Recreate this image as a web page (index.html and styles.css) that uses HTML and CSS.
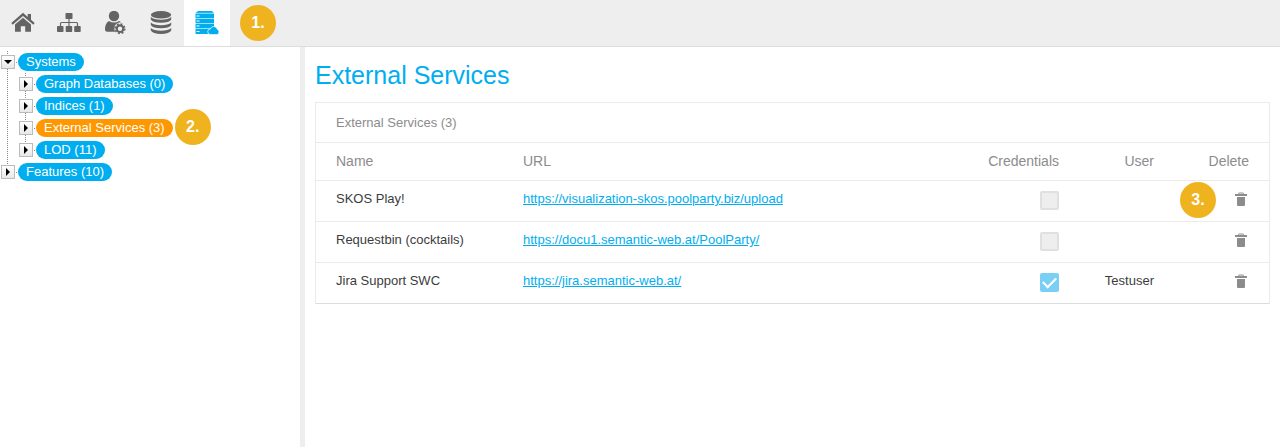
FILE: index.html
```html
<!DOCTYPE html>
<html lang="en">
<head>
    <meta charset="UTF-8">
    <meta name="viewport" content="width=device-width, initial-scale=1.0">
    <title>External Services</title>
    <link rel="stylesheet" href="styles.css">
</head>
<body>
    <svg class="sprite" aria-hidden="true">
        <symbol id="trash" viewBox="0 0 12 15">
            <path d="M3.500 2.500V1.500q0-.5.5-.5h4q.5 0 .5.5v1" fill="none" stroke="currentColor"/>
            <path d="M0 2h12v2H0zM2 5h8v8q0 1-1 1H3q-1 0-1-1z" fill="currentColor"/>
        </symbol>
    </svg>

    <nav class="toolbar">
        <button class="tool" type="button" aria-label="Home">
            <svg width="24" height="24" viewBox="0 0 24 24" fill="currentColor">
                <path d="M12 1.800.3 12l1.400 1.700L12 4.900l10.300 8.800 1.400-1.700L20 8.800V3h-3.300v2.900z"/>
                <path d="M12 6.800 4 13.600V20.700H9.800v-5.500h4.400v5.500H20v-7.100z"/>
            </svg>
        </button>
        <button class="tool" type="button" aria-label="Hierarchy">
            <svg width="24" height="24" viewBox="0 0 24 24" fill="currentColor">
                <rect x="8.500" y="2" width="7" height="6" rx=".8"/>
                <rect x="0" y="15" width="6.500" height="6" rx=".8"/>
                <rect x="8.700" y="15" width="6.500" height="6" rx=".8"/>
                <rect x="17.200" y="15" width="6.500" height="6" rx=".8"/>
                <path d="M12 8v7M3.500 15v-2.500q0-1 1-1h15q1 0 1 1V15" fill="none" stroke="currentColor" stroke-width="1.200"/>
            </svg>
        </button>
        <button class="tool" type="button" aria-label="User settings">
            <svg width="24" height="24" viewBox="0 0 24 24" fill="currentColor">
                <circle cx="11" cy="5" r="5.200"/>
                <path d="M6 10q5 3 10 0 1.300.5 2 1.300-6.300.2-6.700 6.200 0 2 1 3.300H4.300Q2 20.800 2 18.500 2 12 6 10z"/>
                <circle cx="17" cy="17.700" r="3.300" fill="none" stroke="currentColor" stroke-width="2.200"/>
                <circle cx="17" cy="17.700" r="4.800" fill="none" stroke="currentColor" stroke-width="1.600" stroke-dasharray="1.900 1.870"/>
            </svg>
        </button>
        <button class="tool" type="button" aria-label="Database">
            <svg width="24" height="24" viewBox="0 0 24 24" fill="currentColor">
                <ellipse cx="12" cy="3.800" rx="10.200" ry="3.700"/>
                <path d="M1.800 6q3 2.800 10.200 2.800T22.200 6v2.500q-2 3.200-10.200 3.200T1.800 8.500z"/>
                <path d="M1.800 11.500q3 2.800 10.200 2.800t10.200-2.800V14q-2 3.200-10.200 3.200T1.800 14z"/>
                <path d="M1.800 17q3 2.800 10.200 2.800T22.200 17v2.500q-2 3.400-10.200 3.400T1.800 19.500z"/>
            </svg>
        </button>
        <button class="tool active" type="button" aria-label="Systems">
            <svg width="24" height="24" viewBox="0 0 24 24">
                <path d="M3 0h14l2 2.500V23H0V2.500z" fill="#00aeef"/>
                <path d="M0 2.300h19M0 7.500h19M0 12.500h19M0 17.500h19" stroke="#9fe0f9" stroke-width="1"/>
                <path d="M1.500 5h3M1.500 10h3M1.500 15h3M1.500 20.500h3" stroke="#fff" stroke-width="1"/>
                <path d="M0 0v23M19.500 0v23" stroke="#fff" stroke-width="1"/>
                <path d="M16 23.600q-3.300 0-3.300-2.900 0-2.200 2.500-2.600.8-2.600 3.500-2.600 3 0 3.600 2.900 1.700.4 1.700 2.500 0 2.700-2.500 2.700z" fill="#00aeef" stroke="#fff" stroke-width=".7"/>
            </svg>
        </button>
        <span class="step">1.</span>
    </nav>

    <div class="layout">
        <aside class="sidebar">
            <ul class="tree">
                <li>
                    <div class="node">
                        <button class="toggle open" type="button" aria-label="Collapse Systems"></button>
                        <a class="label" href="#systems">Systems</a>
                    </div>
                    <ul>
                        <li>
                            <div class="node">
                                <button class="toggle" type="button" aria-label="Expand Graph Databases"></button>
                                <a class="label" href="#graph">Graph Databases (0)</a>
                            </div>
                        </li>
                        <li>
                            <div class="node">
                                <button class="toggle" type="button" aria-label="Expand Indices"></button>
                                <a class="label" href="#indices">Indices (1)</a>
                            </div>
                        </li>
                        <li>
                            <div class="node">
                                <button class="toggle" type="button" aria-label="Expand External Services"></button>
                                <a class="label selected" href="#external">External Services (3)</a>
                                <span class="anchor"><span class="step step-tree">2.</span></span>
                            </div>
                        </li>
                        <li>
                            <div class="node">
                                <button class="toggle" type="button" aria-label="Expand LOD"></button>
                                <a class="label" href="#lod">LOD (11)</a>
                            </div>
                        </li>
                    </ul>
                </li>
                <li>
                    <div class="node">
                        <button class="toggle" type="button" aria-label="Expand Features"></button>
                        <a class="label" href="#features">Features (10)</a>
                    </div>
                </li>
            </ul>
        </aside>

        <main class="content">
            <h1>External Services</h1>
            <table class="services">
                <caption>External Services (3)</caption>
                <thead>
                    <tr>
                        <th class="col-name">Name</th>
                        <th>URL</th>
                        <th class="col-cred">Credentials</th>
                        <th class="col-end">User</th>
                        <th class="col-end">Delete</th>
                    </tr>
                </thead>
                <tbody>
                    <tr>
                        <td>SKOS Play!</td>
                        <td><a href="https://visualization-skos.poolparty.biz/upload">https://visualization-skos.poolparty.biz/upload</a></td>
                        <td><input type="checkbox" aria-label="SKOS Play! credentials" disabled></td>
                        <td class="user"></td>
                        <td class="delete">
                            <span class="step step-delete">3.</span>
                            <button type="button" aria-label="Delete SKOS Play!"><svg width="12" height="15"><use href="#trash"/></svg></button>
                        </td>
                    </tr>
                    <tr>
                        <td>Requestbin (cocktails)</td>
                        <td><a href="https://docu1.semantic-web.at/PoolParty/">https://docu1.semantic-web.at/PoolParty/</a></td>
                        <td><input type="checkbox" aria-label="Requestbin credentials" disabled></td>
                        <td class="user"></td>
                        <td class="delete">
                            <button type="button" aria-label="Delete Requestbin"><svg width="12" height="15"><use href="#trash"/></svg></button>
                        </td>
                    </tr>
                    <tr>
                        <td>Jira Support SWC</td>
                        <td><a href="https://jira.semantic-web.at/">https://jira.semantic-web.at/</a></td>
                        <td><input type="checkbox" aria-label="Jira credentials" checked disabled></td>
                        <td class="user">Testuser</td>
                        <td class="delete">
                            <button type="button" aria-label="Delete Jira Support SWC"><svg width="12" height="15"><use href="#trash"/></svg></button>
                        </td>
                    </tr>
                </tbody>
            </table>
        </main>
    </div>
</body>
</html>
```
FILE: styles.css
```css
* {
    box-sizing: border-box;
}
body {
    margin: 0;
    min-height: 100vh;
    display: flex;
    flex-direction: column;
    font-family: "Liberation Sans", Arial, sans-serif;
    font-size: 13px;
    line-height: 16px;
    color: #3c3c3c;
    background: #fff;
}
button {
    padding: 0;
    border: none;
    background: none;
    cursor: pointer;
}
.sprite {
    display: none;
}

/* toolbar */
.toolbar {
    display: flex;
    align-items: center;
    background: #eee;
    border-bottom: 1px solid #ddd;
}
.tool {
    display: flex;
    align-items: center;
    justify-content: center;
    width: 46px;
    height: 46px;
    color: #646464;
}
.tool.active {
    background: #fff;
}
.step {
    display: flex;
    align-items: center;
    justify-content: center;
    width: 36px;
    height: 36px;
    border-radius: 50%;
    background: #efb320;
    color: #fff;
    font-size: 16px;
    font-weight: bold;
}
.toolbar .step {
    margin-left: 10px;
}

.layout {
    display: flex;
    flex: 1;
}

/* tree */
.sidebar {
    flex: none;
    width: 305px;
    padding: 4px 0 0 1px;
    border-right: 5px solid #eee;
}
.tree, .tree ul {
    list-style: none;
    margin: 0;
    padding: 0;
}
.tree ul {
    padding-left: 18px;
}
.tree li {
    background: repeating-linear-gradient(#888 0 1px, transparent 1px 2px) 6px 0 / 1px 100% no-repeat;
}
.tree li:last-child {
    background-size: 1px 11px;
}
.node {
    display: flex;
    align-items: center;
    height: 22px;
    background: linear-gradient(#888, #888) 15px 11px / 1px 1px no-repeat;
}
.toggle {
    display: flex;
    align-items: center;
    justify-content: center;
    width: 14px;
    height: 14px;
    border: 1px solid #bbb;
    background: linear-gradient(#fff, #e8e8e8);
}
.toggle::before {
    content: "";
    border: 4px solid transparent;
    border-left-color: #000;
    border-right-width: 0;
}
.toggle.open::before {
    border: 4px solid transparent;
    border-top-color: #000;
    border-bottom-width: 0;
}
.label {
    margin-left: 3px;
    padding: 1px 8px;
    border-radius: 9px;
    background: #00aeef;
    color: #fff;
    text-decoration: none;
}
.label.selected {
    background: #ff9800;
}
.anchor {
    position: relative;
}
.step-tree {
    position: absolute;
    top: -19px;
    left: 2px;
}

/* services table */
.content {
    flex: 1;
    padding: 13px 10px;
}
h1 {
    margin: 0 0 12px;
    font-size: 25px;
    line-height: 30px;
    font-weight: normal;
    color: #00aeef;
}
.services {
    width: 100%;
    border: 1px solid #ebebeb;
    border-bottom-color: #ddd;
    border-spacing: 0;
}
.services caption {
    padding: 12px 20px 11px;
    border: 1px solid #ebebeb;
    border-bottom: none;
    text-align: left;
    color: #8c8c8c;
}
.services th {
    padding: 10px 20px 11px;
    font-size: 14px;
    font-weight: normal;
    text-align: left;
    color: #8c8c8c;
}
.services .col-name {
    width: 187px;
}
.services .col-cred {
    width: 111px;
}
.services .col-end {
    width: 95px;
}
.services .col-cred, .services .col-end, .services .user {
    text-align: right;
}
.services td {
    padding: 10px 20px 11px;
    border-top: 1px solid #ebebeb;
    vertical-align: top;
}
.services a {
    color: #00aeef;
}
.services input {
    appearance: none;
    display: grid;
    place-items: center;
    width: 19px;
    height: 19px;
    margin: 0 0 0 auto;
    border: 2px solid #e0e0e0;
    border-radius: 2px;
    background: #eee;
}
.services input:checked {
    border-color: #7acff5;
    background: #7acff5;
}
.services input:checked::before {
    content: "";
    width: 11px;
    height: 6px;
    margin-bottom: 3px;
    border-left: 2px solid #fff;
    border-bottom: 2px solid #fff;
    transform: rotate(-45deg);
}
.services .delete {
    position: relative;
}
.delete button {
    display: block;
    margin: 1px 2px 0 auto;
    color: #8c8c8c;
}
.delete svg {
    display: block;
}
.step-delete {
    position: absolute;
    top: 1px;
    left: 6px;
}
```
